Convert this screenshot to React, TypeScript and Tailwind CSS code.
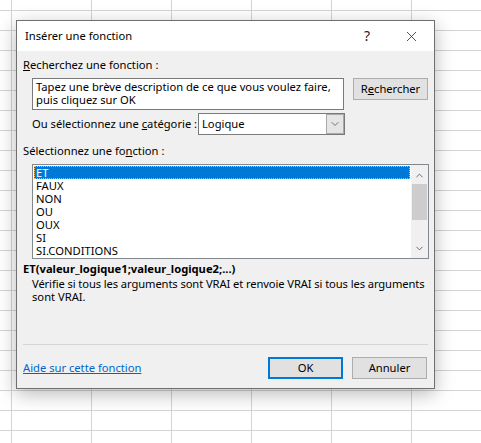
import { ChevronDown, ChevronUp, X } from "lucide-react";

const FUNCTIONS = ["ET", "FAUX", "NON", "OU", "OUX", "SI", "SI.CONDITIONS"];
const COLS = 6;
const ROWS = 22;

function Sheet() {
  // grille du tableur en arrière-plan
  return (
    <div className="flex flex-col">
      <div className="flex h-[11px]">
        <div className="h-full w-[12px] shrink-0 border-b border-r border-[#d4d4d4]" />
        {Array.from({ length: COLS }).map((_, c) => (
          <div key={c} className="h-full w-[80px] shrink-0 border-b border-r border-[#d4d4d4]" />
        ))}
      </div>
      {Array.from({ length: ROWS }).map((_, r) => (
        <div key={r} className="flex h-[20px]">
          <div className="h-full w-[12px] shrink-0 border-b border-r border-[#d4d4d4]" />
          {Array.from({ length: COLS }).map((_, c) => (
            <div key={c} className="h-full w-[80px] shrink-0 border-b border-r border-[#d4d4d4]" />
          ))}
        </div>
      ))}
    </div>
  );
}

function WinButton({ children, focused }: { children: React.ReactNode; focused?: boolean }) {
  return (
    <div
      className={
        focused
          ? "flex h-[22px] w-[75px] items-center justify-center border-2 border-[#0078d7] bg-[#e1e1e1] text-black"
          : "flex h-[22px] w-[75px] items-center justify-center border border-[#adadad] bg-[#e1e1e1] text-black"
      }
    >
      {children}
    </div>
  );
}

export default function App() {
  return (
    <div className="relative h-[443px] w-[481px] overflow-hidden bg-white font-['Noto_Sans',sans-serif] text-[11.2px] leading-[16px] text-black">
      <Sheet />

      <div className="absolute left-[16px] top-[20px] flex h-[369px] w-[419px] flex-col border border-[#6f6f6f] bg-[#f0f0f0] shadow-[0_5px_18px_rgba(0,0,0,0.28)]">
        {/* barre de titre */}
        <div className="flex h-[30px] shrink-0 items-center bg-white">
          <span className="ml-[8px] flex-1">Insérer une fonction</span>
          <span className="mr-[33px] text-[14px] text-[#222]">?</span>
          <X size={17} strokeWidth={1.1} className="mr-[14px] text-[#222]" />
        </div>

        <div className="flex flex-1 flex-col px-[6px] pt-[6px]">
          <div>
            <u>R</u>echerchez une fonction :
          </div>

          <div className="mt-[5px] flex items-start pl-[9px]">
            <div className="h-[32px] w-[313px] border border-[#7a7a7a] bg-white px-[3px] pt-[1px] leading-[13px]">
              Tapez une brève description de ce que vous voulez faire, puis cliquez sur OK
            </div>
            <div className="ml-[9px]">
              <WinButton>
                R<u>e</u>chercher
              </WinButton>
            </div>
          </div>

          <div className="mt-[3px] flex items-center pl-[9px]">
            <span className="w-[166px] whitespace-nowrap">
              Ou sélectionnez une <u>c</u>atégorie :
            </span>
            <div className="flex h-[22px] w-[147px] items-center border border-[#7a7a7a] bg-white">
              <span className="flex-1 pl-[3px]">Logique</span>
              <div className="flex h-full w-[18px] items-center justify-center border border-[#a9a9a9] bg-[#e5e5e5]">
                <ChevronDown size={12} strokeWidth={1.6} className="text-[#555]" />
              </div>
            </div>
          </div>

          <div className="mt-[8px]">
            Sélectionnez une fo<u>n</u>ction :
          </div>

          <div className="ml-[9px] mt-[5px] flex h-[95px] w-[397px] border border-[#828790] bg-white">
            <div className="flex flex-1 flex-col p-[1px]">
              {FUNCTIONS.map((f, i) => (
                <div
                  key={f}
                  className={
                    i === 0
                      ? "h-[13px] border border-dotted border-[#f3b56b] bg-[#0078d7] pl-[1px] leading-[11px] text-white"
                      : "h-[13px] pl-[2px] leading-[13px]"
                  }
                >
                  {f}
                </div>
              ))}
            </div>
            <div className="flex w-[17px] flex-col items-center bg-[#f0f0f0]">
              <ChevronUp size={11} strokeWidth={2} className="mt-[5px] text-[#606060]" />
              <div className="mt-[3px] h-[36px] w-[15px] bg-[#cdcdcd]" />
              <div className="flex-1" />
              <ChevronDown size={11} strokeWidth={2} className="mb-[4px] text-[#606060]" />
            </div>
          </div>

          <div className="mt-[2px] font-bold">ET(valeur_logique1;valeur_logique2;...)</div>
          <div className="pl-[9px] leading-[13px]">
            <div className="whitespace-nowrap tracking-[-0.1px]">
              Vérifie si tous les arguments sont VRAI et renvoie VRAI si tous les arguments
            </div>
            <div>sont VRAI.</div>
          </div>

          <div className="flex-1" />
          <div className="h-px w-[405px] bg-[#d5d5d5]" />

          <div className="mt-[12px] flex items-center">
            <a className="flex-1 text-[#0066cc] underline">Aide sur cette fonction</a>
            <WinButton focused>OK</WinButton>
            <div className="ml-[9px] mr-[1px]">
              <WinButton>Annuler</WinButton>
            </div>
          </div>
          <div className="h-[9px]" />
        </div>
      </div>
    </div>
  );
}
